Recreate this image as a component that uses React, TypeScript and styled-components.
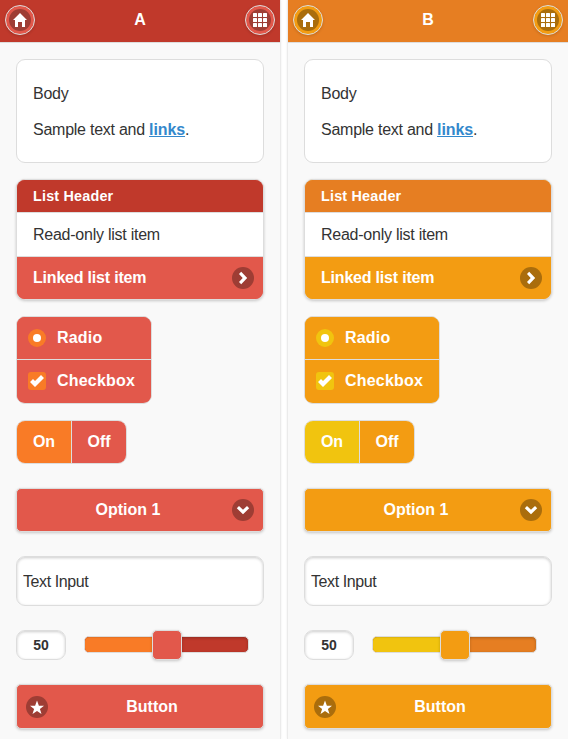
import React from "react";
import styled, { createGlobalStyle, ThemeProvider } from "styled-components";

const Global = createGlobalStyle`
  *, *::before, *::after { box-sizing: border-box; }
  body {
    margin: 0;
    background: #fff;
    color: #333;
    font-family: "Liberation Sans", Arial, Helvetica, sans-serif;
    font-size: 16px;
    line-height: 20px;
    overflow: hidden;
  }
`;

const swatches = {
  a: { name: "A", bar: "#c0392b", button: "#e2584b", active: "#f97b26", disc: "#9e3d34" },
  b: { name: "B", bar: "#e67e22", button: "#f39c12", active: "#f1c40f", disc: "#aa6d0c" },
};

const Previews = styled.main`
  display: flex;
  gap: 8px;
  width: 568px;
  height: 739px;
`;

const Page = styled.section`
  width: 280px;
  height: 739px;
  background: #f9f9f9;
  box-shadow: 0 0 0 1px #ebebeb, 0 0 3px #ddd;
`;

const Header = styled.header`
  display: flex;
  align-items: center;
  justify-content: space-between;
  height: 43px;
  padding: 0 5px 2px;
  background: ${(p) => p.theme.bar};
  border-bottom: 1px solid #ddd;
`;

const Title = styled.h1`
  margin: 0;
  color: #fff;
  font-size: 16px;
  line-height: 20px;
`;

const RoundButton = styled.button`
  display: flex;
  align-items: center;
  justify-content: center;
  width: 30px;
  height: 30px;
  padding: 0;
  border: 1px solid #ddd;
  border-radius: 50%;
  background: ${(p) => p.theme.button};
  box-shadow: 0 1px 3px rgba(0, 0, 0, 0.15);
`;

const Disc = styled.span`
  display: flex;
  flex: none;
  align-items: center;
  justify-content: center;
  width: 22px;
  height: 22px;
  border-radius: 50%;
  background: ${(p) => p.theme.disc};

  svg { display: block; fill: #fff; }
`;

const Content = styled.div`
  display: flex;
  flex-direction: column;
  align-items: flex-start;
  padding: 16px;
`;

const BodyBox = styled.div`
  width: 248px;
  height: 104px;
  padding: 24px 16px;
  border: 1px solid #ddd;
  border-radius: 9px;
  background: #fff;
`;

const Paragraph = styled.p`
  margin: 0 0 16px;
  letter-spacing: -0.25px;
  white-space: pre;
`;

const Link = styled.a`
  color: #3388cc;
  font-weight: bold;
  letter-spacing: -0.1px;
  text-decoration: underline;
`;

const List = styled.ul`
  width: 248px;
  height: 121px;
  margin: 16px 0 0;
  padding: 0;
  list-style: none;
  border: 1px solid #ddd;
  border-radius: 9px;
  overflow: hidden;
  background: ${(p) => p.theme.button};
  box-shadow: 0 1px 3px rgba(0, 0, 0, 0.2);
`;

const Divider = styled.li`
  height: 32px;
  padding: 6px 16px;
  background: ${(p) => p.theme.bar};
  color: #fff;
  font-size: 14.4px;
  font-weight: bold;
  letter-spacing: 0.18px;
`;

const ListItem = styled.li<{ $linked?: boolean }>`
  display: flex;
  align-items: center;
  justify-content: space-between;
  height: ${(p) => (p.$linked ? 42 : 45)}px;
  padding: 0 9px 0 16px;
  border-top: ${(p) => (p.$linked ? "0" : "1px solid #ddd")};
  border-bottom: ${(p) => (p.$linked ? "0" : "1px solid #ddd")};
  background: ${(p) => (p.$linked ? p.theme.button : "#fff")};
  color: ${(p) => (p.$linked ? "#fff" : "#333")};
  font-weight: ${(p) => (p.$linked ? "bold" : "normal")};
  letter-spacing: ${(p) => (p.$linked ? "-0.2px" : "-0.25px")};
`;

const ChoiceGroup = styled.div`
  width: 136px;
  height: 88px;
  margin-top: 16px;
  border: 1px solid #ddd;
  border-radius: 9px;
  overflow: hidden;
  background: ${(p) => p.theme.button};
`;

const Choice = styled.label`
  display: flex;
  align-items: center;
  gap: 11px;
  height: 42px;
  padding-left: 11px;
  background: ${(p) => p.theme.button};
  color: #fff;
  font-weight: bold;
  letter-spacing: 0.2px;

  & + & {
    height: 43px;
    border-top: 1px solid #ddd;
  }
`;

const Mark = styled.span<{ $round?: boolean }>`
  display: flex;
  align-items: center;
  justify-content: center;
  width: 18px;
  height: 18px;
  border-radius: ${(p) => (p.$round ? "50%" : "3px")};
  background: ${(p) => p.theme.active};
`;

const Dot = styled.span`
  width: 8px;
  height: 8px;
  border-radius: 50%;
  background: #fff;
`;

const Toggle = styled.div`
  display: flex;
  width: 111px;
  height: 44px;
  margin-top: 16px;
  border: 1px solid #ddd;
  border-radius: 9px;
  overflow: hidden;
`;

const ToggleOption = styled.button<{ $on?: boolean }>`
  flex: ${(p) => (p.$on ? "0 0 55px" : "1")};
  padding: 0;
  border: 0;
  border-right: ${(p) => (p.$on ? "1px solid #ddd" : "0")};
  background: ${(p) => (p.$on ? p.theme.active : p.theme.button)};
  color: #fff;
  font: bold 16px/20px "Liberation Sans", Arial, sans-serif;
`;

const WideButton = styled.button<{ $icon: "left" | "right" }>`
  display: grid;
  grid-template-columns: ${(p) => (p.$icon === "left" ? "22px 1fr" : "1fr 22px")};
  align-items: center;
  width: 248px;
  height: ${(p) => (p.$icon === "left" ? 45 : 44)}px;
  margin-top: 24px;
  padding: ${(p) => (p.$icon === "left" ? "0 7px 0 9px" : "0 9px 0 7px")};
  border: 1px solid #ddd;
  border-radius: 5px;
  background: ${(p) => p.theme.button};
  box-shadow: 0 1px 3px rgba(0, 0, 0, 0.2);
  color: #fff;
  font: bold 16px/20px "Liberation Sans", Arial, sans-serif;
  text-align: center;
`;

const TextField = styled.input`
  width: 248px;
  height: 50px;
  margin: 24px 0 0;
  padding: 2px 6px 0;
  border: 1px solid #ddd;
  border-radius: 9px;
  background: #fff;
  box-shadow: inset 0 1px 3px rgba(0, 0, 0, 0.2);
  color: #333;
  font: 16px "Liberation Sans", Arial, sans-serif;
  letter-spacing: -0.4px;
  outline: 0;
`;

const SliderRow = styled.div`
  display: flex;
  align-items: center;
  gap: 18px;
  height: 30px;
  margin-top: 24px;
`;

const NumberField = styled.input`
  width: 50px;
  height: 30px;
  margin: 0;
  padding: 0;
  border: 1px solid #ddd;
  border-radius: 9px;
  background: #fff;
  box-shadow: inset 0 1px 3px rgba(0, 0, 0, 0.2);
  color: #333;
  font: bold 14px "Liberation Sans", Arial, sans-serif;
  text-align: center;
  outline: 0;
`;

const Track = styled.div`
  display: flex;
  align-items: center;
  width: 165px;
  height: 17px;
  margin-top: -1px;
  border: 1px solid #ddd;
  border-radius: 5px;
  background: ${(p) => p.theme.bar};
  box-shadow: inset 0 1px 3px rgba(0, 0, 0, 0.25);
`;

const Fill = styled.div`
  width: 82px;
  height: 15px;
  border-radius: 4px 0 0 4px;
  background: ${(p) => p.theme.active};
  box-shadow: inset 0 1px 1px rgba(0, 0, 0, 0.08);
`;

const Handle = styled.div`
  flex: none;
  width: 30px;
  height: 30px;
  margin: 1px 0 0 -15px;
  border: 1px solid #ddd;
  border-radius: 5px;
  background: ${(p) => p.theme.button};
  box-shadow: 0 1px 3px rgba(0, 0, 0, 0.2);
`;

const HomeIcon = () => (
  <svg width="14" height="14" viewBox="0 0 14 14">
    <polygon points="7,0 0,7 2,7 2,14 5,14 5,9 9,9 9,14 12,14 12,7 14,7" />
  </svg>
);
const GridIcon = () => (
  <svg width="14" height="14" viewBox="0 0 14 14">
    {[0, 5, 10].flatMap((y) => [0, 5, 10].map((x) => <rect key={`${x}-${y}`} x={x} y={y} width="4" height="4" rx=".5" />))}
  </svg>
);
const ChevronRight = () => (
  <svg width="14" height="14" viewBox="0 0 14 14">
    <polygon points="3,3 6.700,7 3,11 5.200,13.200 11.200,7 5.200,0.800" />
  </svg>
);
const ChevronDown = () => (
  <svg width="14" height="14" viewBox="0 0 14 14">
    <polygon points="11,3 7,6.700 3,3 0.800,5.200 7,11.200 13.200,5.200" />
  </svg>
);
const StarIcon = () => (
  <svg width="14" height="14" viewBox="0 0 14 14">
    <polygon points="14,5.700 8.900,5.700 7,0.500 5.100,5.700 0,5.700 4.100,9 2.500,14 7,11 11.500,14 9.900,9" />
  </svg>
);
const CheckIcon = () => (
  <svg width="14" height="14" viewBox="0 0 14 14">
    <polygon points="14,4 11,1 5,7 3,5 0,8 5,13" fill="#fff" />
  </svg>
);

function Preview({ swatch }: { swatch: (typeof swatches)["a"] }) {
  return (
    <ThemeProvider theme={swatch}>
      <Page>
        <Header>
          <RoundButton aria-label="Home"><Disc><HomeIcon /></Disc></RoundButton>
          <Title>{swatch.name}</Title>
          <RoundButton aria-label="Grid"><Disc><GridIcon /></Disc></RoundButton>
        </Header>
        <Content>
          <BodyBox>
            <Paragraph>Body</Paragraph>
            <Paragraph>Sample text and <Link href="#">links</Link>.</Paragraph>
          </BodyBox>
          <List>
            <Divider>List Header</Divider>
            <ListItem>Read-only list item</ListItem>
            <ListItem $linked>Linked list item<Disc><ChevronRight /></Disc></ListItem>
          </List>
          <ChoiceGroup>
            <Choice><Mark $round><Dot /></Mark>Radio</Choice>
            <Choice><Mark><CheckIcon /></Mark>Checkbox</Choice>
          </ChoiceGroup>
          <Toggle>
            <ToggleOption $on>On</ToggleOption>
            <ToggleOption>Off</ToggleOption>
          </Toggle>
          <WideButton $icon="right">
            <span>Option 1</span>
            <Disc><ChevronDown /></Disc>
          </WideButton>
          <TextField defaultValue="Text Input" />
          <SliderRow>
            <NumberField defaultValue="50" />
            <Track><Fill /><Handle /></Track>
          </SliderRow>
          <WideButton $icon="left">
            <Disc><StarIcon /></Disc>
            <span>Button</span>
          </WideButton>
        </Content>
      </Page>
    </ThemeProvider>
  );
}

export default function App() {
  return (
    <>
      <Global />
      <Previews>
        <Preview swatch={swatches.a} />
        <Preview swatch={swatches.b} />
      </Previews>
    </>
  );
}
